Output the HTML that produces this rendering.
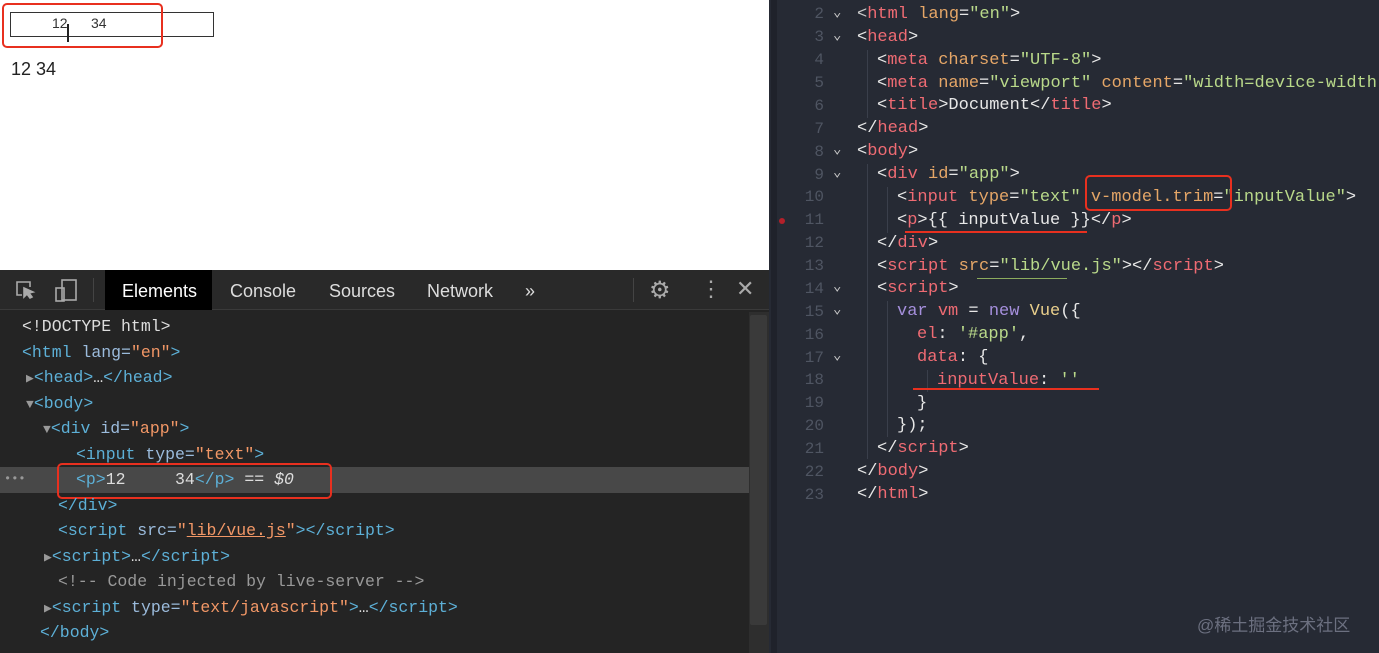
<!DOCTYPE html>
<html><head><meta charset="utf-8"><style>
*{margin:0;padding:0;box-sizing:border-box}
body{width:1379px;height:653px;overflow:hidden;position:relative;background:#262a34;font-family:"Liberation Mono",monospace}
.l{position:absolute;white-space:pre}
#page{position:absolute;left:0;top:0;width:769px;height:270px;background:#fff}
#dev{position:absolute;left:0;top:270px;width:769px;height:383px;background:#242424}
#tabs{position:absolute;left:0;top:0;width:769px;height:40px;background:#292929;border-bottom:1px solid #3a3a3a;font-family:"Liberation Sans",sans-serif;font-size:18px;color:#ddd}
.tab{position:absolute;top:11px}
.d{font-size:16.5px;color:#9bbbdc;left:0}
.t{color:#5db0d7}.s{color:#f29766}.g{color:#999;font-size:13px}.w{color:#ddd}
#ed{position:absolute;left:771px;top:0;width:608px;height:653px;background:#262a34}
.e{font-size:17px;color:#e7e7e7}
.n{position:absolute;width:53px;text-align:right;color:#4f5562;font-size:16px}
.r{color:#ef6b73}.o{color:#e5a667}.gs{color:#b9d98a}.p{color:#a58fdc}.y{color:#e9cf8c}.c{color:#ccc}
.box{position:absolute;border:2px solid #e8301f;border-radius:5px}
.ul{position:absolute;height:2px;background:#e8301f}
.ig{position:absolute;width:1px;background:#3a3f4b}
</style></head><body>
<div id="page">
<div style="position:absolute;left:10px;top:12px;width:204px;height:25px;border:1.5px solid #333;font-family:'Liberation Sans',sans-serif;font-size:14px;color:#333"><span style="position:absolute;left:41px;top:2px">12</span><span style="position:absolute;left:80px;top:2px">34</span></div>
<div style="position:absolute;left:67px;top:24px;width:2px;height:18px;background:#222"></div>
<div class="box" style="left:2px;top:3px;width:161px;height:45px"></div>
<div style="position:absolute;left:11px;top:59px;font-family:'Liberation Sans',sans-serif;font-size:18px;color:#222">12 34</div>
</div>
<div id="dev">
<div id="tabs">
<svg style="position:absolute;left:14px;top:9px" width="22" height="22" viewBox="0 0 22 22" fill="none" stroke="#aaa" stroke-width="1.6"><path d="M8 16H3V3h13v5"/><path d="M10 9l9 4-4 1 3 4-2 1-3-4-3 3z" fill="#aaa"/></svg>
<svg style="position:absolute;left:53px;top:8px" width="26" height="26" viewBox="0 0 26 26" fill="none" stroke="#aaa" stroke-width="1.6"><rect x="9" y="2" width="14" height="20"/><rect x="3" y="10" width="8" height="13"/></svg>
<div style="position:absolute;left:93px;top:8px;width:1px;height:24px;background:#444"></div>
<div style="position:absolute;left:105px;top:0;width:107px;height:40px;background:#000"></div>
<span class="tab" style="left:122px;color:#fff">Elements</span>
<span class="tab" style="left:230px">Console</span>
<span class="tab" style="left:329px">Sources</span>
<span class="tab" style="left:427px">Network</span>
<span class="tab" style="left:525px">»</span>
<div style="position:absolute;left:633px;top:8px;width:1px;height:24px;background:#444"></div>
<span class="tab" style="left:649px;top:6px;font-size:24px;color:#aaa">⚙</span>
<span class="tab" style="left:700px;top:6px;font-size:22px;color:#aaa">⋮</span>
<span class="tab" style="left:736px;top:6px;font-size:22px;color:#aaa">✕</span>
</div>
<div style="position:absolute;left:749px;top:42px;width:20px;height:341px;background:#2e2e2e"></div>
<div style="position:absolute;left:750px;top:45px;width:17px;height:310px;background:#3a3a3a;border-radius:2px"></div>
<div style="position:absolute;left:0;top:197px;width:749px;height:26px;background:#484848"></div>
<div class="l d w" style="left:22px;top:47px">&lt;!DOCTYPE html&gt;</div>
<div class="l d" style="left:22px;top:73px"><span class="t">&lt;html</span> lang=<span class="s">"en"</span><span class="t">&gt;</span></div>
<div class="l d" style="left:26px;top:98px"><span class="g">▶</span><span class="t">&lt;head&gt;</span><span class="w">…</span><span class="t">&lt;/head&gt;</span></div>
<div class="l d" style="left:26px;top:124px"><span class="g">▼</span><span class="t">&lt;body&gt;</span></div>
<div class="l d" style="left:43px;top:149px"><span class="g">▼</span><span class="t">&lt;div</span> id=<span class="s">"app"</span><span class="t">&gt;</span></div>
<div class="l d" style="left:76px;top:175px"><span class="t">&lt;input</span> type=<span class="s">"text"</span><span class="t">&gt;</span></div>
<div class="l d" style="left:4px;top:202px;color:#999;font-size:12px">•••</div>
<div class="l d" style="left:76px;top:200px"><span class="t">&lt;p&gt;</span><span class="w">12     34</span><span class="t">&lt;/p&gt;</span> <span class="w">== <i>$0</i></span></div>
<div class="box" style="left:57px;top:193px;width:275px;height:36px"></div>
<div class="l d" style="left:58px;top:226px"><span class="t">&lt;/div&gt;</span></div>
<div class="l d" style="left:58px;top:251px"><span class="t">&lt;script</span> src=<span class="s">"<u>lib/vue.js</u>"</span><span class="t">&gt;&lt;/script&gt;</span></div>
<div class="l d" style="left:44px;top:277px"><span class="g">▶</span><span class="t">&lt;script&gt;</span><span class="w">…</span><span class="t">&lt;/script&gt;</span></div>
<div class="l d" style="left:58px;top:302px;color:#999">&lt;!-- Code injected by live-server --&gt;</div>
<div class="l d" style="left:44px;top:328px"><span class="g">▶</span><span class="t">&lt;script</span> type=<span class="s">"text/javascript"</span><span class="t">&gt;</span><span class="w">…</span><span class="t">&lt;/script&gt;</span></div>
<div class="l d" style="left:40px;top:353px"><span class="t">&lt;/body&gt;</span></div>
</div>
<div id="ed">
<div style="position:absolute;left:0;top:0;width:6px;height:653px;background:#1f222b"></div>
</div>
<div id="code">
<div class="ig" style="left:867px;top:50px;height:68px"></div>
<div class="ig" style="left:867px;top:164px;height:295px"></div>
<div class="ig" style="left:887px;top:187px;height:46px"></div>
<div class="ig" style="left:887px;top:301px;height:136px"></div>
<div class="ig" style="left:927px;top:370px;height:22px"></div>
<div class="n" style="left:771px;top:5px">2</div><div class="n" style="left:771px;top:28px">3</div><div class="n" style="left:771px;top:51px">4</div><div class="n" style="left:771px;top:74px">5</div><div class="n" style="left:771px;top:97px">6</div><div class="n" style="left:771px;top:120px">7</div><div class="n" style="left:771px;top:143px">8</div><div class="n" style="left:771px;top:166px">9</div><div class="n" style="left:771px;top:188px">10</div><div class="n" style="left:771px;top:211px">11</div><div class="n" style="left:771px;top:234px">12</div><div class="n" style="left:771px;top:257px">13</div><div class="n" style="left:771px;top:280px">14</div><div class="n" style="left:771px;top:303px">15</div><div class="n" style="left:771px;top:326px">16</div><div class="n" style="left:771px;top:349px">17</div><div class="n" style="left:771px;top:371px">18</div><div class="n" style="left:771px;top:394px">19</div><div class="n" style="left:771px;top:417px">20</div><div class="n" style="left:771px;top:440px">21</div><div class="n" style="left:771px;top:463px">22</div><div class="n" style="left:771px;top:486px">23</div>
<div style="position:absolute;left:779px;top:218px;width:6px;height:6px;border-radius:50%;background:#b3202a"></div>
<div class="l e c" style="left:833px;top:4px;font-size:14px">⌄</div><div class="l e c" style="left:833px;top:27px;font-size:14px">⌄</div><div class="l e c" style="left:833px;top:141px;font-size:14px">⌄</div><div class="l e c" style="left:833px;top:164px;font-size:14px">⌄</div><div class="l e c" style="left:833px;top:278px;font-size:14px">⌄</div><div class="l e c" style="left:833px;top:301px;font-size:14px">⌄</div><div class="l e c" style="left:833px;top:347px;font-size:14px">⌄</div>
<div class="l e" style="left:857px;top:5px"><span class="c">&lt;</span><span class="r">html</span> <span class="o">lang</span>=<span class="gs">"en"</span>&gt;</div>
<div class="l e" style="left:857px;top:28px">&lt;<span class="r">head</span>&gt;</div>
<div class="l e" style="left:877px;top:51px">&lt;<span class="r">meta</span> <span class="o">charset</span>=<span class="gs">"UTF-8"</span>&gt;</div>
<div class="l e" style="left:877px;top:74px">&lt;<span class="r">meta</span> <span class="o">name</span>=<span class="gs">"viewport"</span> <span class="o">content</span>=<span class="gs">"width=device-width</span></div>
<div class="l e" style="left:877px;top:96px">&lt;<span class="r">title</span>&gt;Document&lt;/<span class="r">title</span>&gt;</div>
<div class="l e" style="left:857px;top:119px">&lt;/<span class="r">head</span>&gt;</div>
<div class="l e" style="left:857px;top:142px">&lt;<span class="r">body</span>&gt;</div>
<div class="l e" style="left:877px;top:165px">&lt;<span class="r">div</span> <span class="o">id</span>=<span class="gs">"app"</span>&gt;</div>
<div class="l e" style="left:897px;top:188px">&lt;<span class="r">input</span> <span class="o">type</span>=<span class="gs">"text"</span> <span class="o">v-model.trim</span>=<span class="gs">"inputValue"</span>&gt;</div>
<div class="l e" style="left:897px;top:211px">&lt;<span class="r">p</span>&gt;{{ inputValue }}&lt;/<span class="r">p</span>&gt;</div>
<div class="l e" style="left:877px;top:234px">&lt;/<span class="r">div</span>&gt;</div>
<div class="l e" style="left:877px;top:257px">&lt;<span class="r">script</span> <span class="o">src</span>=<span class="gs">"lib/vue.js"</span>&gt;&lt;/<span class="r">script</span>&gt;</div>
<div class="l e" style="left:877px;top:279px">&lt;<span class="r">script</span>&gt;</div>
<div class="l e" style="left:897px;top:302px"><span class="p">var</span> <span class="r">vm</span> = <span class="p">new</span> <span class="y">Vue</span>({</div>
<div class="l e" style="left:917px;top:325px"><span class="r">el</span>: <span class="gs">'#app'</span>,</div>
<div class="l e" style="left:917px;top:348px"><span class="r">data</span>: {</div>
<div class="l e" style="left:937px;top:371px"><span class="r">inputValue</span>: <span class="gs">''</span></div>
<div class="l e" style="left:917px;top:394px">}</div>
<div class="l e" style="left:897px;top:416px">});</div>
<div class="l e" style="left:877px;top:439px">&lt;/<span class="r">script</span>&gt;</div>
<div class="l e" style="left:857px;top:462px">&lt;/<span class="r">body</span>&gt;</div>
<div class="l e" style="left:857px;top:485px">&lt;/<span class="r">html</span>&gt;</div>
<div class="box" style="left:1085px;top:175px;width:147px;height:36px"></div>
<div class="ul" style="left:905px;top:231px;width:182px"></div>
<div class="ul" style="left:913px;top:388px;width:186px"></div>
<div class="ul" style="left:977px;top:278px;width:90px;height:1px;background:#8cab5e"></div>
<div class="l" style="left:1197px;top:611px;font-family:'Liberation Sans','Noto Sans CJK SC',sans-serif;font-size:17px;color:#6c7080">@稀土掘金技术社区</div>
</div>
</body></html>
